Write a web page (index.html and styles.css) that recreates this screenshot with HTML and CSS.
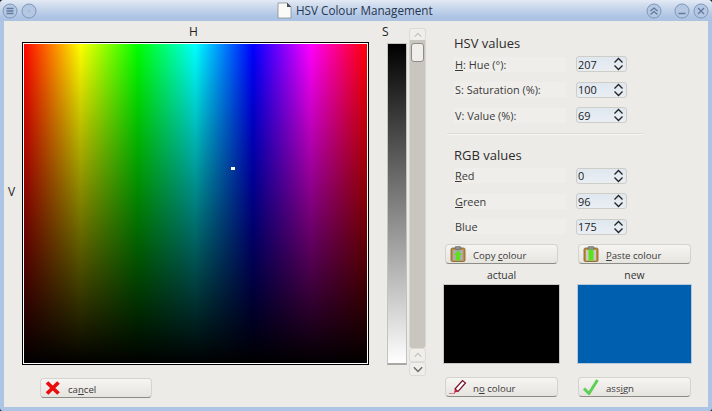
FILE: index.html
```html
<!DOCTYPE html>
<html>
<head>
<meta charset="utf-8">
<title>HSV Colour Management</title>
<link rel="stylesheet" href="styles.css">
</head>
<body>
<div class="window">
  <header class="titlebar">
    <div class="wm-group wm-left">
      <svg class="wm" viewBox="0 0 16 16"><circle cx="8" cy="8" r="7" class="wm-c"/><path d="M4.500 5.500h7M4.500 8h7M4.500 10.500h7" class="wm-s"/></svg>
      <svg class="wm" viewBox="0 0 16 16"><circle cx="8" cy="8" r="7" class="wm-c"/><circle cx="8" cy="8" r="1" class="wm-d"/></svg>
    </div>
    <div class="title">
      <svg class="doc" viewBox="0 0 15 17"><path d="M1 1h9l4 4v11H1z" fill="#fafaf6" stroke="#8a8f96" stroke-width=".8"/><path d="M10 .6l4.400 4.400h-4.400z" fill="#4a4f55"/></svg>
      <span>HSV Colour Management</span>
    </div>
    <div class="wm-group wm-right">
      <svg class="wm wm-shade" viewBox="0 0 16 16"><circle cx="8" cy="8" r="7" class="wm-c"/><path d="M4.500 8l3.500-3 3.500 3M4.500 11.500l3.500-3 3.500 3" class="wm-s"/></svg>
      <svg class="wm wm-min" viewBox="0 0 16 16"><circle cx="8" cy="8" r="7" class="wm-c"/><path d="M4.500 10.500h7" class="wm-s"/></svg>
      <svg class="wm" viewBox="0 0 16 16"><circle cx="8" cy="8" r="7" class="wm-c"/><path d="M5 5l6 6M11 5l-6 6" class="wm-s"/></svg>
    </div>
  </header>
  <main class="client">
    <section class="left">
      <div class="pick-row">
        <div class="v-label">V</div>
        <div class="h-col">
          <div class="axis">H</div>
          <div class="picker"><div class="marker"></div></div>
        </div>
        <div class="s-col">
          <div class="axis s-axis">S</div>
          <div class="sbar"></div>
        </div>
        <div class="scroll">
          <div class="sc-btn sc-top"><svg viewBox="0 0 16 12"><path d="M4 8l4-4 4 4" class="chev-light"/></svg></div>
          <div class="sc-track"><div class="sc-thumb"></div></div>
          <div class="sc-btn"><svg viewBox="0 0 16 12"><path d="M4 8l4-4 4 4" class="chev-light"/></svg></div>
          <div class="sc-btn"><svg viewBox="0 0 16 12"><path d="M3 4l5 5 5-5" class="chev-dark"/></svg></div>
        </div>
      </div>
      <button class="btn btn-cancel"><svg class="ico" viewBox="0 0 18 16"><path d="M3 2.500l11.500 11M14.500 2.500l-11.500 11" fill="none" stroke="#e80c0c" stroke-width="3.800"/></svg><span>ca<u>n</u>cel</span></button>
    </section>
    <section class="right">
      <div class="values">
        <h2>HSV values</h2>
        <div class="row"><label><u>H</u>: Hue (°):</label><div class="spin"><span>207</span><svg viewBox="0 0 10 14"><path d="M1 5.500L5 1.500l4 4M1 8.500l4 4 4-4" class="spin-a"/></svg></div></div>
        <div class="row"><label>S: Saturation (%):</label><div class="spin"><span>100</span><svg viewBox="0 0 10 14"><path d="M1 5.500L5 1.500l4 4M1 8.500l4 4 4-4" class="spin-a"/></svg></div></div>
        <div class="row"><label>V: Value (%):</label><div class="spin"><span>69</span><svg viewBox="0 0 10 14"><path d="M1 5.500L5 1.500l4 4M1 8.500l4 4 4-4" class="spin-a"/></svg></div></div>
      </div>
      <hr class="sep">
      <div class="values">
        <h2>RGB values</h2>
        <div class="row"><label><u>R</u>ed</label><div class="spin"><span>0</span><svg viewBox="0 0 10 14"><path d="M1 5.500L5 1.500l4 4M1 8.500l4 4 4-4" class="spin-a"/></svg></div></div>
        <div class="row"><label><u>G</u>reen</label><div class="spin"><span>96</span><svg viewBox="0 0 10 14"><path d="M1 5.500L5 1.500l4 4M1 8.500l4 4 4-4" class="spin-a"/></svg></div></div>
        <div class="row"><label>Blue</label><div class="spin"><span>175</span><svg viewBox="0 0 10 14"><path d="M1 5.500L5 1.500l4 4M1 8.500l4 4 4-4" class="spin-a"/></svg></div></div>
      </div>
      <div class="pair pair-actions pair-top">
        <button class="btn"><svg class="ico" viewBox="0 0 18 16"><rect x="2" y="2" width="14" height="13.500" rx="1.500" fill="#c08f3e" stroke="#7d5c26" stroke-width=".8"/><rect x="4" y="4" width="10" height="10.500" fill="#a9adb0"/><rect x="6" y=".5" width="6" height="3.200" rx="1" fill="#8b8f92" stroke="#5f6366" stroke-width=".5"/><path d="M9 4.500l4 4.500h-2v5.500H7V9H5z" fill="#5fe01c"/></svg><span>Copy <u>c</u>olour</span></button>
        <button class="btn"><svg class="ico" viewBox="0 0 18 16"><rect x="2" y="2" width="14" height="13.500" rx="1.500" fill="#c08f3e" stroke="#7d5c26" stroke-width=".8"/><rect x="4" y="4" width="10" height="10.500" fill="#c9cbc8"/><rect x="6" y=".5" width="6" height="3.200" rx="1" fill="#8b8f92" stroke="#5f6366" stroke-width=".5"/><rect x="6.500" y="3.500" width="5" height="11" fill="#5fe01c"/></svg><span><u>P</u>aste colour</span></button>
      </div>
      <div class="pair pair-swatch">
        <div class="sw-col"><div class="sw-label">actual</div><div class="swatch sw-black"></div></div>
        <div class="sw-col sw-col-new"><div class="sw-label">new</div><div class="swatch sw-blue"></div></div>
      </div>
      <div class="pair pair-actions">
        <button class="btn"><svg class="ico" viewBox="0 0 18 16"><path d="M6 10L13.500 1.500 16.500 4 9 12.500z" fill="#fff" stroke="#7a1030" stroke-width="1.200"/><path d="M6 10l3 2.500-4 1.500z" fill="#c2203a"/><path d="M.5 14.500H6" stroke="#c2203a" stroke-width="1.200" stroke-dasharray="1 1"/></svg><span>n<u>o</u> colour</span></button>
        <button class="btn"><svg class="ico" viewBox="0 0 18 16"><path d="M2 9.500l5 5L15.500 1" fill="none" stroke="#5fcf55" stroke-width="3"/></svg><span>ass<u>i</u>gn</span></button>
      </div>
    </section>
  </main>
</div>
</body>
</html>
```
FILE: styles.css
```css
* { box-sizing: border-box; }
html, body { margin: 0; padding: 0; }
body { width: 712px; height: 411px; overflow: hidden; background: #222; font-family: "Open Sans", "Noto Sans", sans-serif; font-size: 10.9px; color: #3a3a3a; }
.window { width: 712px; height: 411px; display: flex; flex-direction: column; background: #adc4e4; border-radius: 4px 4px 3px 3px; overflow: hidden; }

.titlebar { height: 21px; flex: none; display: flex; align-items: center; justify-content: space-between; background: linear-gradient(#e3eaf5 0, #d4dfef 4px, #adc4e4 17px, #abc2e3 100%); }
.wm-group { display: flex; align-items: center; }
.wm-left { gap: 3px; margin-left: 2px; }
.wm-right { margin-right: 3px; }
.wm { width: 16px; height: 16px; }
.wm-shade { margin-right: 12px; }
.wm-min { margin-right: 3px; }
.wm-c { fill: #b4c8e4; stroke: #7f96b5; stroke-width: 1; }
.wm-s { fill: none; stroke: #62799a; stroke-width: 1.300; }
.wm-d { fill: #a0b4d0; }
.title { position: absolute; left: 277px; top: 2px; display: flex; align-items: center; gap: 4px; font-size: 11.700px; color: #26364f; line-height: 17px; }
.doc { width: 15px; height: 17px; }

.client { flex: 1; margin: 0 4px 4px; background: #edebe7; display: flex; min-height: 0; }
.left { width: 435px; flex: none; }
.pick-row { display: flex; align-items: flex-start; height: 355px; }
.v-label { width: 18px; margin-top: 164px; padding-left: 4px; font-size: 12px; line-height: 14px; color: #222; }
.h-col { width: 347px; padding-top: 4px; }
.axis { padding-right: 4px; text-align: center; font-size: 12px; line-height: 14px; color: #222; height: 17px; }
.picker { position: relative; width: 347px; height: 323px; border: 1px solid #000; outline: 1px solid #fff; outline-offset: -2px; background: linear-gradient(rgba(0,0,0,0), #000), linear-gradient(90deg, #f00, #ff0 16.67%, #0f0 33.33%, #0ff 50%, #00f 66.67%, #f0f 83.33%, #f00); }
.marker { position: absolute; left: 208px; top: 124px; width: 4px; height: 3px; background: #fff; }
.s-col { width: 20px; margin-left: 18px; padding-top: 4px; }
.s-axis { margin-left: -5px; padding: 0; text-align: left; height: 18px; }
.sbar { width: 20px; height: 322px; border: 1px solid #c4c2bd; border-bottom: 2px solid #a9a7a3; background: linear-gradient(#000, #fff); }
.scroll { width: 17px; margin: 7px 0 0 2px; display: flex; flex-direction: column; }
.sc-btn { height: 14px; background: #efeeea; border: 1px solid #dcdad5; border-radius: 3px; display: flex; align-items: center; justify-content: center; }
.sc-btn svg { width: 14px; height: 10px; }
.sc-top { height: 12px; border-bottom: 0; }
.sc-track { height: 308px; background: #c9c6bf; border-left: 1px solid #d8d6d0; border-right: 1px solid #d8d6d0; border-radius: 0 0 3px 3px; }
.sc-thumb { width: 13px; height: 19px; margin: 3px 1px 0; background: #efeeea; border: 1px solid #8f8d89; border-radius: 3px; }
.chev-light { fill: none; stroke: #c4c2bd; stroke-width: 1.500; }
.chev-dark { fill: none; stroke: #6e6c68; stroke-width: 1.800; }

.btn { display: flex; align-items: center; height: 20px; padding: 0 0 0 3px; background: linear-gradient(#f6f5f2, #e6e4df); border: 1px solid #d5d3ce; border-bottom: 1px solid #8e8c88; border-radius: 4px; font: inherit; font-size: 9.600px; color: #3a3a3a; text-align: left; }
.btn-cancel { width: 112px; margin: 2px 0 0 36px; }
.ico { width: 18px; height: 16px; flex: none; }
.btn span { margin-left: 6px; padding-top: 2px; }

.right { width: 265px; padding-left: 4px; }
.values { padding: 0 0 0 11px; }
h2 { margin: 0; font-weight: 400; font-size: 13px; line-height: 16px; color: #2c2c2c; }
.values:first-child h2 { margin-top: 14px; }
.row { display: flex; align-items: center; justify-content: space-between; height: 16px; margin-bottom: 9.500px; width: 173px; }
.values h2 + .row { margin-top: 5px; }
.row label { width: 112px; padding-left: 1px; background: #efeeea; line-height: 15px; }
.spin { width: 51px; height: 16px; display: flex; align-items: center; justify-content: space-between; padding: 0 2px 0 1px; background: linear-gradient(#dfe7ef, #e9eef3); border: 1px solid #cfcdc8; border-radius: 3px; color: #222; }
.spin svg { width: 11px; height: 14px; }
.spin-a { fill: none; stroke: #222; stroke-width: 1.300; }
.sep { margin: 2px 0 12px 4px; width: 196px; height: 2px; border: 0; background: linear-gradient(#dedcd7 50%, #f7f6f4 50%); }
.pair { display: flex; }
.pair-actions { gap: 20px; padding-left: 2px; }
.pair-top { margin-top: 2px; }
.pair-actions .btn { width: 113px; }
.pair-swatch { gap: 17px; margin: 4px 0 13px; }
.sw-col { width: 117px; }
.sw-col-new { width: 115px; }
.sw-label { text-align: center; font-size: 10.400px; line-height: 15px; height: 16px; color: #333; }
.swatch { height: 80px; border: 1px solid #c9c7c2; }
.sw-black { background: #000; }
.sw-blue { background: #0060af; border-color: #b9c9dc; }
```
